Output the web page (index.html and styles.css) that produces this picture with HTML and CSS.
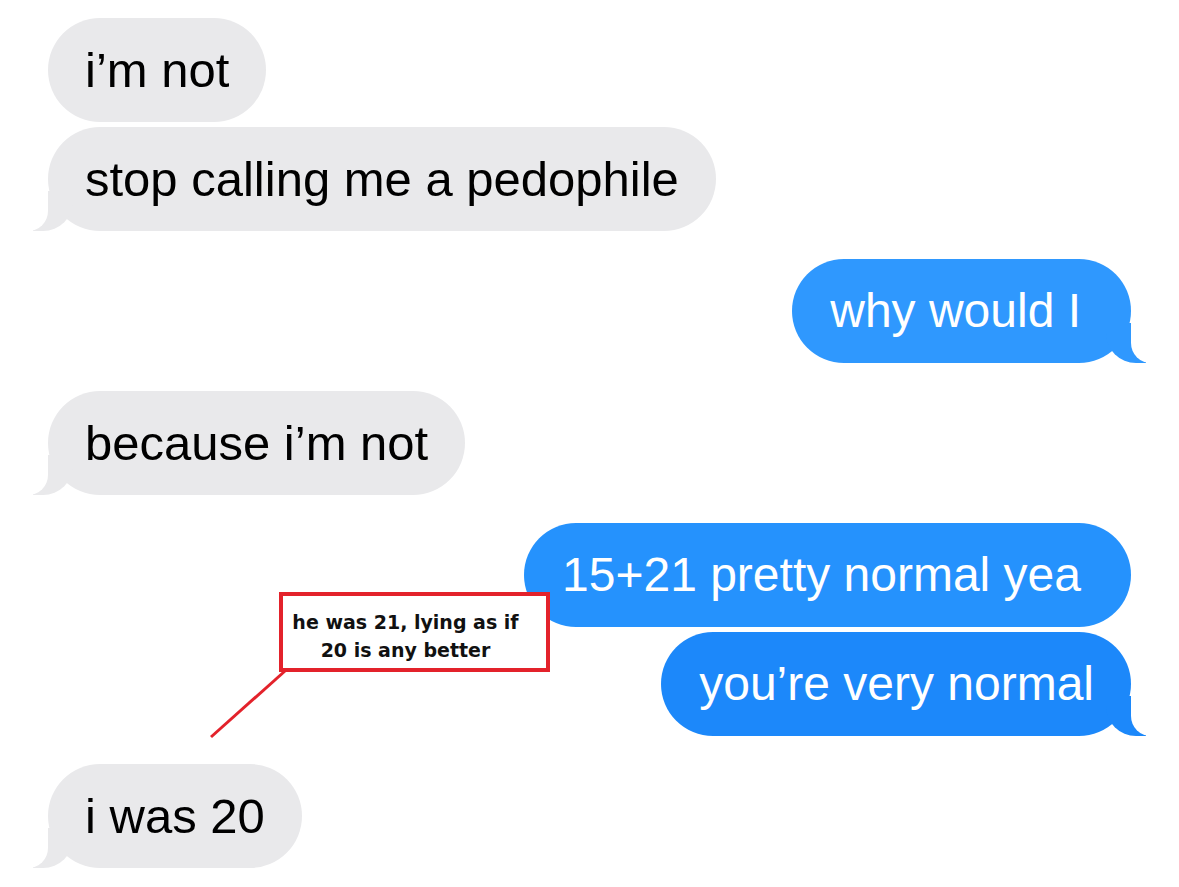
FILE: index.html
```html
<!DOCTYPE html>
<html lang="en">
<head>
    <meta charset="UTF-8">
    <meta name="viewport" content="width=device-width, initial-scale=1.0">
    <title>Messages</title>
    <link rel="stylesheet" href="styles.css">
</head>
<body>
    <div class="chat">
        <div class="bubble them">i’m not</div>
        <div class="bubble them tail next">stop calling me a pedophile</div>
        <div class="bubble me tail gap c1">why would I</div>
        <div class="bubble them tail gap">because i’m not</div>
        <div class="bubble me gap c2">15+21 pretty normal yea</div>
        <div class="bubble me tail next c3">you’re very normal</div>
        <div class="bubble them tail gap">i was 20</div>

        <div class="note">
            <div class="note-box">he was 21, lying as if<br>20 is any better</div>
            <svg class="note-line" width="80" height="72" viewBox="0 0 80 72">
                <line x1="76" y1="2" x2="2" y2="68" stroke="#e3222b" stroke-width="3"/>
            </svg>
        </div>
    </div>
</body>
</html>
```

FILE: styles.css
```css
* {
    box-sizing: border-box;
}
body {
    background-color: white;
    margin: 0;
    padding: 0;
    font-family: "Liberation Sans", Arial, sans-serif;
}
.chat {
    position: relative;
    display: flex;
    flex-direction: column;
    padding: 18px 48px 0 48px;
    width: 1179px;
    height: 887px;
}
.bubble {
    position: relative;
    z-index: 0;
    height: 104px;
    line-height: 104px;
    border-radius: 52px;
    white-space: nowrap;
}
.next {
    margin-top: 5px;
}
.gap {
    margin-top: 28px;
}
.them {
    align-self: flex-start;
    background-color: #e9e9eb;
    color: black;
    font-size: 49px;
    padding: 0 37px;
}
.me {
    align-self: flex-end;
    color: white;
    font-size: 48px;
    padding: 0 50px 0 38px;
}
.c1 {
    background-color: #2f98fe;
}
.c2 {
    background-color: #2592fd;
}
.c3 {
    background-color: #1c88fa;
    padding-right: 37px;
}

/* bubble tails */
.tail::before {
    content: "";
    position: absolute;
    bottom: 0;
    width: 40px;
    height: 40px;
    z-index: -1;
}
.tail::after {
    content: "";
    position: absolute;
    bottom: 0;
    width: 20px;
    height: 40px;
    background: white;
    z-index: -1;
}
.them.tail::before {
    left: -15px;
    background: #e9e9eb;
    border-bottom-right-radius: 30px;
}
.them.tail::after {
    left: -20px;
    border-bottom-right-radius: 20px;
}
.me.tail::before {
    right: -15px;
    border-bottom-left-radius: 30px;
}
.me.tail::after {
    right: -20px;
    border-bottom-left-radius: 20px;
}
.c1.tail::before {
    background: #2f98fe;
}
.c3.tail::before {
    background: #1c88fa;
}

/* red annotation */
.note {
    position: absolute;
    left: 209px;
    top: 592px;
}
.note-box {
    margin-left: 70px;
    width: 271px;
    height: 80px;
    border: 4px solid #e3222b;
    background: white;
    text-align: center;
    font-family: "DejaVu Sans", sans-serif;
    font-weight: bold;
    font-size: 19px;
    line-height: 28px;
    padding: 12px 18px 0 0;
    color: #111;
}
.note-line {
    display: block;
    margin-top: -3px;
}
```
